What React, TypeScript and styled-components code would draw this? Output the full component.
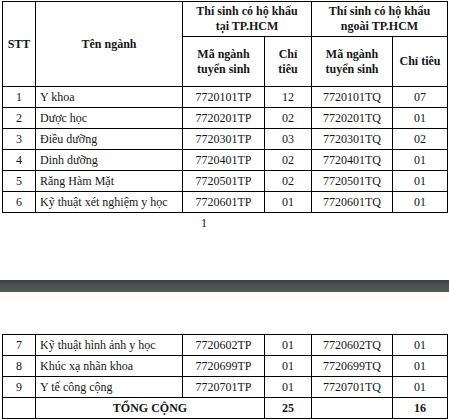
import React from "react";
import styled, { createGlobalStyle } from "styled-components";

const Global = createGlobalStyle`
  html, body { margin: 0; padding: 0; background: #fff; }
  body {
    font-family: "Liberation Serif", "Times New Roman", serif;
    color: #161616;
    -webkit-font-smoothing: antialiased;
  }
`;

const Page = styled.div`
  width: 449px;
  display: flex;
  flex-direction: column;
`;

const Sheet = styled.section<{ $top: number; $height?: number }>`
  padding: ${(p) => p.$top}px 0 0 2px;
  height: ${(p) => (p.$height ? `${p.$height}px` : "auto")};
  box-sizing: border-box;
`;

const Table = styled.table`
  border-collapse: collapse;
  table-layout: fixed;
  width: 445px;
  font-size: 12px;
`;

const HeadCell = styled.th<{ $h?: number }>`
  border: 1px solid #000;
  font-weight: 700;
  text-align: center;
  vertical-align: middle;
  line-height: 15px;
  padding: 0 2px;
  height: ${(p) => (p.$h ? `${p.$h}px` : "auto")};
  box-sizing: border-box;
`;

const Cell = styled.td<{ $align?: "left" | "center"; $bold?: boolean }>`
  border: 1px solid #000;
  height: 21px;
  box-sizing: border-box;
  padding: 0 ${(p) => (p.$align === "left" ? "4px" : "2px")};
  text-align: ${(p) => p.$align ?? "center"};
  font-weight: ${(p) => (p.$bold ? 700 : 400)};
  vertical-align: middle;
  line-height: 14px;
  white-space: nowrap;
`;

const PageNumber = styled.div`
  padding-left: 199px;
  margin-top: 3px;
  font-size: 12px;
  line-height: 14px;
`;

const Divider = styled.div`
  height: 12px;
  background: linear-gradient(#3c4043, #4d5256 45%, #53585b);
`;

const Tint = styled.div`
  height: 8px;
  background: #fefdf7;
`;

type Row = { stt: string; name: string; tp: string; tpN: string; tq: string; tqN: string };

const rowsA: Row[] = [
  { stt: "1", name: "Y khoa", tp: "7720101TP", tpN: "12", tq: "7720101TQ", tqN: "07" },
  { stt: "2", name: "Dược học", tp: "7720201TP", tpN: "02", tq: "7720201TQ", tqN: "01" },
  { stt: "3", name: "Điều dưỡng", tp: "7720301TP", tpN: "03", tq: "7720301TQ", tqN: "02" },
  { stt: "4", name: "Dinh dưỡng", tp: "7720401TP", tpN: "02", tq: "7720401TQ", tqN: "01" },
  { stt: "5", name: "Răng Hàm Mặt", tp: "7720501TP", tpN: "02", tq: "7720501TQ", tqN: "01" },
  { stt: "6", name: "Kỹ thuật xét nghiệm y học", tp: "7720601TP", tpN: "01", tq: "7720601TQ", tqN: "01" },
];

const rowsB: Row[] = [
  { stt: "7", name: "Kỹ thuật hình ảnh y học", tp: "7720602TP", tpN: "01", tq: "7720602TQ", tqN: "01" },
  { stt: "8", name: "Khúc xạ nhãn khoa", tp: "7720699TP", tpN: "01", tq: "7720699TQ", tqN: "01" },
  { stt: "9", name: "Y tế công cộng", tp: "7720701TP", tpN: "01", tq: "7720701TQ", tqN: "01" },
];

const Cols = () => (
  <colgroup>
    <col style={{ width: 33 }} />
    <col style={{ width: 147 }} />
    <col style={{ width: 82 }} />
    <col style={{ width: 47 }} />
    <col style={{ width: 81 }} />
    <col style={{ width: 55 }} />
  </colgroup>
);

const DataRow = ({ r }: { r: Row }) => (
  <tr>
    <Cell>{r.stt}</Cell>
    <Cell $align="left">{r.name}</Cell>
    <Cell>{r.tp}</Cell>
    <Cell>{r.tpN}</Cell>
    <Cell>{r.tq}</Cell>
    <Cell>{r.tqN}</Cell>
  </tr>
);

export default function App() {
  return (
    <Page>
      <Global />
      <Sheet $top={1} $height={280}>
        <Table>
          <Cols />
          <thead>
            <tr>
              <HeadCell rowSpan={2}>STT</HeadCell>
              <HeadCell rowSpan={2}>Tên ngành</HeadCell>
              <HeadCell colSpan={2} $h={35}>
                Thí sinh có hộ khẩu
                <br />
                tại TP.HCM
              </HeadCell>
              <HeadCell colSpan={2} $h={35}>
                Thí sinh có hộ khẩu
                <br />
                ngoài TP.HCM
              </HeadCell>
            </tr>
            <tr>
              <HeadCell $h={50}>
                Mã ngành
                <br />
                tuyển sinh
              </HeadCell>
              <HeadCell $h={50}>
                Chỉ
                <br />
                tiêu
              </HeadCell>
              <HeadCell $h={50}>
                Mã ngành
                <br />
                tuyển sinh
              </HeadCell>
              <HeadCell $h={50}>Chỉ tiêu</HeadCell>
            </tr>
          </thead>
          <tbody>
            {rowsA.map((r) => (
              <DataRow key={r.stt} r={r} />
            ))}
          </tbody>
        </Table>
        <PageNumber>1</PageNumber>
      </Sheet>
      <Divider />
      <Tint />
      <Sheet $top={34}>
        <Table>
          <Cols />
          <tbody>
            {rowsB.map((r) => (
              <DataRow key={r.stt} r={r} />
            ))}
            <tr>
              <Cell />
              <Cell colSpan={2} $bold>
                TỔNG CỘNG
              </Cell>
              <Cell $bold>25</Cell>
              <Cell />
              <Cell $bold>16</Cell>
            </tr>
          </tbody>
        </Table>
      </Sheet>
    </Page>
  );
}
